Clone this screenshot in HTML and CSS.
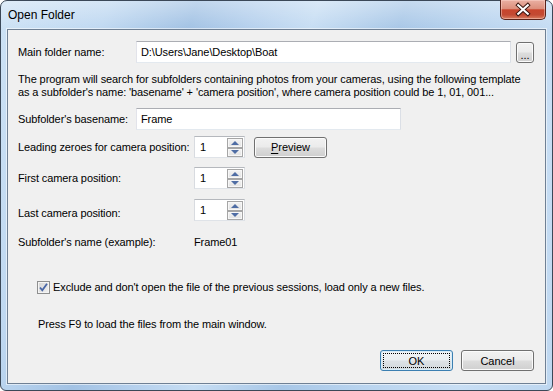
FILE: index.html
```html
<!DOCTYPE html>
<html lang="en">
<head>
    <meta charset="UTF-8">
    <title>Open Folder</title>
    <link rel="stylesheet" href="styles.css">
</head>
<body>
    <div class="window">
        <div class="titlebar">
            <span class="title">Open Folder</span>
            <button class="close-btn" aria-label="Close">
                <svg width="46" height="19" viewBox="0 0 46 19">
                    <path d="M18 5 L28 14 M28 5 L18 14" stroke="#3b1610" stroke-width="4.2" stroke-linecap="square" fill="none"/>
                    <path d="M18 5 L28 14 M28 5 L18 14" stroke="#ffffff" stroke-width="2.2" stroke-linecap="square" fill="none"/>
                </svg>
            </button>
        </div>

        <div class="client">
            <div class="row row-folder">
                <span class="label label-wide">Main folder name:</span>
                <input class="textbox textbox-folder" type="text" value="D:\Users\Jane\Desktop\Boat">
                <button class="btn btn-browse">...</button>
            </div>

            <p class="hint">The program will search for subfolders containing photos from your cameras, using the following template<br>as a subfolder's name: 'basename' + 'camera position', where camera position could be 1, 01, 001...</p>

            <div class="row row-basename">
                <span class="label label-wide">Subfolder's basename:</span>
                <input class="textbox textbox-basename" type="text" value="Frame">
            </div>

            <div class="row row-zeroes">
                <span class="label label-spin">Leading zeroes for camera position:</span>
                <div class="spin">
                    <span class="spin-value">1</span>
                    <span class="spin-buttons">
                        <span class="spin-btn"><span class="arrow-up"></span></span>
                        <span class="spin-btn"><span class="arrow-down"></span></span>
                    </span>
                </div>
                <button class="btn btn-preview"><u>P</u>review</button>
            </div>

            <div class="row row-first">
                <span class="label label-spin">First camera position:</span>
                <div class="spin">
                    <span class="spin-value">1</span>
                    <span class="spin-buttons">
                        <span class="spin-btn"><span class="arrow-up"></span></span>
                        <span class="spin-btn"><span class="arrow-down"></span></span>
                    </span>
                </div>
            </div>

            <div class="row row-last">
                <span class="label label-spin label-low">Last camera position:</span>
                <div class="spin">
                    <span class="spin-value">1</span>
                    <span class="spin-buttons">
                        <span class="spin-btn"><span class="arrow-up"></span></span>
                        <span class="spin-btn"><span class="arrow-down"></span></span>
                    </span>
                </div>
            </div>

            <div class="row row-example">
                <span class="label label-spin">Subfolder's name (example):</span>
                <span class="example">Frame01</span>
            </div>

            <label class="check-row">
                <span class="checkbox">
                    <svg width="11" height="11" viewBox="0 0 11 11">
                        <path d="M2 5.5 L4.3 8.3 L9 1.8" stroke="#4866a6" stroke-width="1.8" fill="none"/>
                    </svg>
                </span>
                <span>Exclude and don't open the file of the previous sessions, load only a new files.</span>
            </label>

            <p class="note">Press F9 to load the files from the main window.</p>

            <div class="actions">
                <button class="btn btn-ok">OK</button>
                <button class="btn btn-cancel">Cancel</button>
            </div>
        </div>
    </div>
</body>
</html>
```

FILE: styles.css
```css
* {
    margin: 0;
    padding: 0;
    box-sizing: border-box;
}

html, body {
    width: 553px;
    height: 391px;
    overflow: hidden;
    background: #ffffff;
}

body {
    font-family: "Liberation Sans", Arial, sans-serif;
    font-size: 11px;
    letter-spacing: -0.1px;
    color: #000;
}

.window {
    width: 553px;
    height: 391px;
    border: 1px solid #3b4858;
    border-radius: 7px 7px 6px 6px;
    padding: 0 6px 6px 6px;
    display: flex;
    flex-direction: column;
    background:
        linear-gradient(to bottom, rgba(255, 255, 255, 0.35), rgba(255, 255, 255, 0) 28px),
        linear-gradient(108deg, #cde2f5 0%, #bfd8f1 16%, #a2c2e4 29%, #b5d0ed 38%, #c6ddf3 47%, #a8c7e7 60%, #b9d4ef 72%, #c8def4 86%, #bed7f0 100%);
}

/* title bar */
.titlebar {
    height: 28px;
    display: flex;
    justify-content: space-between;
    align-items: flex-start;
}

.title {
    margin: 7px 0 0 1px;
    font-size: 12px;
    line-height: 14px;
    letter-spacing: 0;
    color: #000;
}

.close-btn {
    width: 46px;
    height: 20px;
    margin-top: -1px;
    border: 1px solid #5a2219;
    border-top: none;
    border-radius: 0 0 5px 5px;
    background: linear-gradient(to bottom, #eab0a3 0%, #dc8f7c 45%, #c8452d 52%, #c34a33 78%, #d97d60 100%);
    box-shadow: inset 0 0 0 1px rgba(255, 220, 210, 0.45);
    display: flex;
    align-items: center;
    justify-content: center;
}

.close-btn svg {
    display: block;
}

/* client area */
.client {
    flex: 1;
    background: #f0f0f0;
    border: 1px solid #6f8094;
    box-shadow: 0 0 0 1px rgba(255, 255, 255, 0.55);
    padding: 11px 11px 0 10px;
}

.row {
    display: flex;
    align-items: center;
}

.label-wide {
    width: 118px;
    flex-shrink: 0;
}

.label-spin {
    width: 176px;
    flex-shrink: 0;
}

.label-low {
    padding-top: 5px;
}

.textbox {
    height: 22px;
    border: 1px solid;
    border-color: #abadb3 #dbdfe6 #e3e9ef #e2e3ea;
    background: #fff;
    font-family: "Liberation Sans", Arial, sans-serif;
    font-size: 11px;
    letter-spacing: -0.1px;
    color: #000;
    padding: 0 4px;
    outline: none;
}

.textbox-folder {
    width: 375px;
}

.textbox-basename {
    width: 265px;
}

.btn {
    font-family: "Liberation Sans", Arial, sans-serif;
    font-size: 11px;
    letter-spacing: 0;
    color: #000;
    border: 1px solid #707070;
    border-radius: 3px;
    background: linear-gradient(to bottom, #f2f2f2 0%, #ebebeb 48%, #dddddd 52%, #cfcfcf 100%);
    box-shadow: inset 0 0 0 1px #fbfbfb;
}

.btn-browse {
    width: 18px;
    height: 21px;
    margin: 1px 0 0 5px;
    line-height: 24px;
    padding: 0;
    align-self: flex-start;
}

.row-folder {
    height: 22px;
}

.hint {
    margin-top: 10px;
    line-height: 13px;
}

.row-basename {
    margin-top: 9px;
    height: 22px;
}

.row-zeroes {
    margin-top: 6px;
}

.row-first {
    margin-top: 9px;
}

.row-last {
    margin-top: 10px;
}

/* spin box */
.spin {
    width: 51px;
    height: 22px;
    display: flex;
    border: 1px solid;
    border-color: #b5b8bd #dadde2 #dfe3e8 #d8dbe0;
    background: #fff;
}

.spin-value {
    flex: 1;
    padding-left: 5px;
    line-height: 20px;
}

.spin-buttons {
    width: 17px;
    padding: 1px 1px 0 0;
    display: flex;
    flex-direction: column;
}

.spin-btn {
    flex: 1;
    border: 1px solid #a6a6a6;
    box-shadow: inset 0 0 0 1px #f7f7f7;
    background: linear-gradient(to bottom, #f3f3f3, #e2e2e2);
    display: flex;
    align-items: center;
    justify-content: center;
}

.arrow-up {
    width: 0;
    height: 0;
    border-left: 4px solid transparent;
    border-right: 4px solid transparent;
    border-bottom: 4px solid #4f6da4;
}

.arrow-down {
    width: 0;
    height: 0;
    border-left: 4px solid transparent;
    border-right: 4px solid transparent;
    border-top: 4px solid #4f6da4;
}

.btn-preview {
    width: 73px;
    height: 21px;
    margin-left: 9px;
}

.btn-preview u {
    text-decoration-thickness: 1px;
    text-underline-offset: 2px;
}

/* example and options */
.row-example {
    margin-top: 15px;
    line-height: 13px;
}

.check-row {
    margin: 32px 0 0 19px;
    display: flex;
    align-items: center;
    gap: 3px;
    line-height: 13px;
}

.checkbox {
    width: 13px;
    height: 13px;
    border: 1px solid #8e8f8f;
    background: linear-gradient(135deg, #d4d4d4, #f2f2f2);
    box-shadow: inset 0 0 0 1px #f4f4f4;
    display: flex;
    align-items: center;
    justify-content: center;
}

.checkbox svg {
    display: block;
}

.note {
    margin: 24px 0 0 20px;
    line-height: 13px;
}

.actions {
    margin-top: 19px;
    display: flex;
    justify-content: flex-end;
    gap: 8px;
}

.actions .btn {
    width: 73px;
    height: 21px;
}

.btn-ok {
    border-color: #3c7fb1;
    box-shadow: inset 0 0 0 1px #d6ecf8;
    background: linear-gradient(to bottom, #f1f4f6 0%, #eaeef1 48%, #dde2e6 52%, #d2d8dc 100%);
    outline: 1px dotted #000;
    outline-offset: -4px;
}
```
